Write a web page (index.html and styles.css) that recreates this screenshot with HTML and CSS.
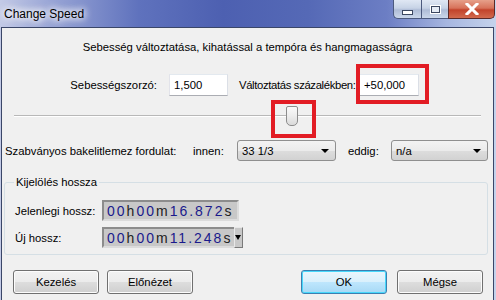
FILE: index.html
```html
<!DOCTYPE html>
<html lang="hu">
<head>
    <meta charset="UTF-8">
    <title>Change Speed</title>
    <link rel="stylesheet" href="styles.css">
</head>
<body>
    <div class="window">
        <div class="titlebar">
            <span class="title">Change Speed</span>
            <div class="controls">
                <span class="ctl min"><i></i></span>
                <span class="ctl max"><i></i></span>
                <span class="ctl close">
                    <svg width="16" height="12" viewBox="0 0 16 12">
                        <path d="M3 1 L13 11 M13 1 L3 11" stroke="#fff" stroke-width="3" stroke-linecap="square"/>
                    </svg>
                </span>
            </div>
        </div>

        <div class="content">
            <p class="intro">Sebesség változtatása, kihatással a tempóra és hangmagasságra</p>

            <div class="row-factor">
                <label class="factor-label">Sebességszorzó:</label>
                <input class="field field-factor" type="text" value="1,500">
                <label class="percent-label">Változtatás százalékben:</label>
                <input class="field field-percent" type="text" value="+50,000">
            </div>

            <div class="slider">
                <span class="thumb" style="margin-left:272px"></span>
            </div>

            <div class="row-rpm">
                <span class="rpm-label">Szabványos bakelitlemez fordulat:</span>
                <span class="from-label">innen:</span>
                <div class="combo combo-from">33 1/3<b class="arrow"></b></div>
                <span class="to-label">eddig:</span>
                <div class="combo combo-to">n/a<b class="arrow"></b></div>
            </div>

            <div class="group">
                <span class="group-title">Kijelölés hossza</span>
                <div class="time-row">
                    <span class="time-label">Jelenlegi hossz:</span>
                    <div class="timer"><em>00</em>h<em>00</em>m<em>16.872</em>s</div>
                </div>
                <div class="time-row">
                    <span class="time-label">Új hossz:</span>
                    <div class="timer timer-new"><em>00</em>h<em>00</em>m<em>11.248</em>s<b class="timer-drop"></b></div>
                </div>
            </div>

            <div class="buttons">
                <button class="btn">Kezelés</button>
                <button class="btn">Előnézet</button>
                <span class="spacer"></span>
                <button class="btn btn-default">OK</button>
                <button class="btn">Mégse</button>
            </div>
        </div>

        <!-- annotation boxes drawn over the screenshot -->
        <span class="mark mark-percent"></span>
        <span class="mark mark-thumb"></span>
    </div>
</body>
</html>
```

FILE: styles.css
```css
html, body {
    margin: 0;
    padding: 0;
}
body {
    font-family: "Liberation Sans", Arial, sans-serif;
    font-size: 11.3px;
    color: #000;
    background: #f0f0f0;
}
.window {
    position: relative;
    width: 496px;
    height: 300px;
    overflow: hidden;
    display: flex;
    flex-direction: column;
    background: linear-gradient(90deg, #c3cae6 0%, #9aa6d6 10%, #5f72bd 28%, #4d60b1 45%, #5569b6 62%, #6c7ec4 78%, #a6b6e0 90%, #c5d3ec 100%);
}
.titlebar {
    height: 27px;
    flex: none;
    display: flex;
    align-items: flex-start;
    justify-content: space-between;
}
.title {
    margin: 7px 0 0 4px;
    line-height: 14px;
    font-size: 12px;
    text-shadow: 0 0 6px #fff, 0 0 8px #fff, 0 0 10px #fff;
}
.controls {
    display: flex;
    margin-right: 1px;
}
.ctl {
    height: 18px;
    border: 1px solid #4c5a7e;
    border-top: none;
    display: flex;
    align-items: center;
    justify-content: center;
    background: linear-gradient(180deg, #e0e8f4 0%, #c7d3e6 45%, #aebcd6 55%, #cbd7ea 100%);
}
.min {
    width: 27px;
    border-radius: 0 0 0 5px;
    border-right: none;
}
.min i {
    width: 9px;
    height: 3px;
    margin-top: 6px;
    background: #fff;
    border: 1px solid #3b4760;
}
.max {
    width: 26px;
    border-right: none;
}
.max i {
    width: 7px;
    height: 5px;
    border: 1px solid #3b4760;
    outline: 1px solid #fff;
    background: #e6ecf5;
}
.close {
    width: 45px;
    border-radius: 0 0 5px 0;
    background: linear-gradient(180deg, #e6a08a 0%, #d7725a 45%, #c2432b 55%, #d26a4e 100%);
    border-color: #5a2a2a;
}
.content {
    flex: 1;
    margin: 0 2px 0 1px;
    border: 1px solid #3a4668;
    border-bottom: none;
    background: #f0f0f0;
}
.intro {
    margin: 11px 0 0 0;
    line-height: 16px;
    text-align: center;
}
.row-factor {
    display: flex;
    align-items: center;
    margin-top: 19px;
    height: 22px;
    white-space: nowrap;
}
.factor-label {
    width: 155px;
    text-align: right;
}
.percent-label {
    width: 113px;
    letter-spacing: -0.35px;
}
.field {
    box-sizing: border-box;
    height: 22px;
    font: inherit;
    border: 1px solid #abadb3;
    border-top-color: #e3e9ef;
    border-left-color: #e2e3ea;
    border-right-color: #dbdfe6;
    background: #fff;
    padding: 0 4px;
    outline: none;
}
.field-factor {
    width: 59px;
    margin: 0 11px 0 12px;
}
.field-percent {
    width: 60px;
    margin-left: 7px;
}
.slider {
    height: 20px;
    margin: 10px 12px 0 12px;
    background: linear-gradient(180deg, transparent 9px, #b8b8b8 9px, #b8b8b8 10px, #ffffff 10px, #ffffff 11px, transparent 11px);
}
.thumb {
    display: block;
    box-sizing: border-box;
    width: 12px;
    height: 20px;
    border: 1px solid #8c8c8c;
    border-radius: 2px 2px 5px 5px;
    background: linear-gradient(180deg, #fafafa 0%, #ececec 50%, #dadada 100%);
}
.row-rpm {
    display: flex;
    align-items: center;
    margin: 14px 0 0 3px;
    height: 21px;
}
.rpm-label {
    width: 188px;
}
.from-label {
    width: 44px;
}
.to-label {
    width: 43px;
    margin-left: 12px;
}
.combo {
    box-sizing: border-box;
    height: 21px;
    display: flex;
    align-items: center;
    justify-content: space-between;
    padding: 0 6px 0 4px;
    border: 1px solid #8f8f8f;
    border-radius: 3px;
    background: linear-gradient(180deg, #f3f3f3 0%, #ebebeb 50%, #dddddd 51%, #d2d2d2 100%);
}
.combo-from {
    width: 99px;
}
.combo-to {
    width: 97px;
}
.arrow {
    width: 0;
    height: 0;
    border-left: 4px solid transparent;
    border-right: 4px solid transparent;
    border-top: 4px solid #000;
}
.group {
    margin: 21px 5px 0 2px;
    padding: 0 0 6px 10px;
    border: 1px solid #d5dfe5;
    border-radius: 3px;
}
.group-title {
    display: inline-block;
    margin: -8px 0 0 -1px;
    padding: 0 2px;
    line-height: 14px;
    background: #f0f0f0;
    vertical-align: top;
}
.time-row {
    display: flex;
    align-items: center;
    margin-top: 5px;
}
.time-row + .time-row {
    margin-top: 6px;
}
.time-label {
    width: 87px;
}
.timer {
    position: relative;
    box-sizing: border-box;
    width: 137px;
    height: 21px;
    display: flex;
    align-items: center;
    padding-left: 3px;
    border: 2px solid #b4b4b4;
    border-top-color: #8c8c8c;
    border-left-color: #8c8c8c;
    border-right-color: #dcdcdc;
    border-bottom-color: #dcdcdc;
    background: #c8c8c8;
    font-size: 14px;
    letter-spacing: 2px;
    color: #222;
    white-space: nowrap;
}
.timer-new {
    width: 133px;
    border-right: none;
}
.timer em {
    font-style: normal;
    color: #1a1a8c;
}
.timer-drop {
    position: absolute;
    right: -8px;
    top: -2px;
    width: 7px;
    height: 19px;
    border: 1px solid #7a7a7a;
    border-left-color: #e8e8e8;
    border-top-color: #e8e8e8;
    background: #c8c8c8;
}
.timer-drop::after {
    content: "";
    position: absolute;
    left: 0;
    top: 7px;
    border-left: 3.5px solid transparent;
    border-right: 3.5px solid transparent;
    border-top: 5px solid #000;
}
.buttons {
    display: flex;
    margin: 15px 10px 0 11px;
}
.spacer {
    flex: 1;
}
.btn {
    box-sizing: border-box;
    width: 86px;
    height: 24px;
    margin-right: 8px;
    font: inherit;
    color: #000;
    border: 1px solid #707070;
    border-radius: 3px;
    background: linear-gradient(180deg, #f2f2f2 0%, #ebebeb 50%, #dddddd 51%, #cfcfcf 100%);
    box-shadow: inset 0 0 0 1px #fcfcfc;
}
.btn:last-child {
    margin-right: 0;
}
.btn-default {
    margin-right: 10px;
    border-color: #3c7fb1;
    background: linear-gradient(180deg, #eaf6fd 0%, #d9f0fc 50%, #bee6fd 51%, #a7d9f5 100%);
    box-shadow: inset 0 0 0 1px #48d8fb;
}
.mark {
    position: absolute;
    box-sizing: border-box;
    border: 4px solid #e21c24;
}
.mark-percent {
    left: 356px;
    top: 64px;
    width: 73px;
    height: 40px;
}
.mark-thumb {
    left: 271px;
    top: 100px;
    width: 45px;
    height: 38px;
}
```
